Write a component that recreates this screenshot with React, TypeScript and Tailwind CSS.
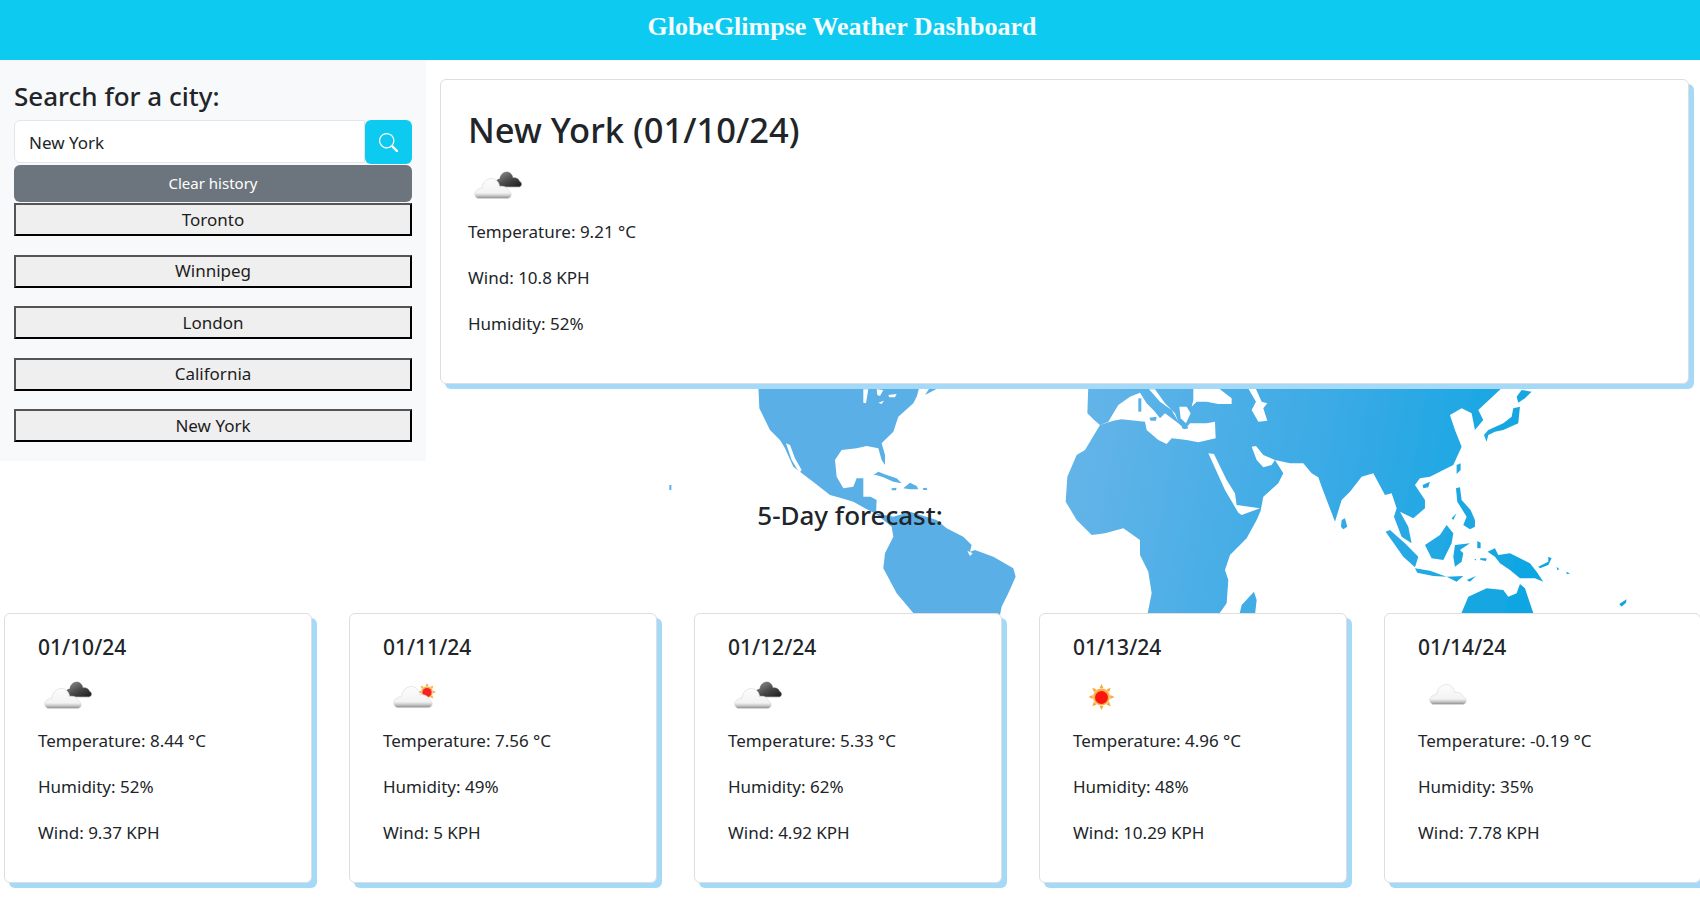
import { BsSearch } from "react-icons/bs";

const font = "font-['Noto_Sans',sans-serif]";

function CloudShape({ x, y, w, dark }: { x: number; y: number; w: number; dark?: boolean }) {
  const k = w / 38;
  return (
    <g transform={`translate(${x} ${y}) scale(${k})`}>
      <path
        d="M5 21.5C0 21.5 -1 14 4 12.5C5 11.5 6.5 11 8 11C8.5 3 17 -1 22 3C24.5 5 25.5 7.5 25.5 9.5C29.5 8.5 33.5 10.5 34.5 14C38.5 15.5 38 21.5 33.5 21.5Z"
        fill={dark ? "url(#darkCloud)" : "url(#lightCloud)"}
        stroke={dark ? "#5c5c5c" : "#dddddd"}
        strokeWidth="0.7"
        filter="url(#soft)"
      />
    </g>
  );
}

function Sun({ cx, cy, r, clip }: { cx: number; cy: number; r: number; clip?: boolean }) {
  const rays = [0, 45, 90, 135, 180, 225, 270, 315];
  return (
    <g filter="url(#soft)">
      {rays.map((a) => (
        <path
          key={a}
          d={`M${cx - r * 0.3} ${cy - r * 1.35}L${cx} ${cy - r * 2}L${cx + r * 0.3} ${cy - r * 1.35}Z`}
          fill="#f9a63a"
          transform={`rotate(${a} ${cx} ${cy})`}
        />
      ))}
      <circle cx={cx} cy={cy} r={r * 1.3} fill="#fbb04a" />
      <circle cx={cx} cy={cy + 0.5} r={r} fill={clip ? "#f5222a" : "#f8170f"} />
    </g>
  );
}

function WeatherIcon({ kind }: { kind: "broken" | "few" | "clear" | "scattered" }) {
  return (
    <svg width="57" height="57" viewBox="0 0 57 57" className="block">
      <defs>
        <linearGradient id="lightCloud" x1="0" y1="0" x2="0" y2="1">
          <stop offset="0" stopColor="#fdfdfd" />
          <stop offset="0.72" stopColor="#f3f3f3" />
          <stop offset="0.84" stopColor="#cfcfcf" />
          <stop offset="1" stopColor="#8a8a8a" />
        </linearGradient>
        <linearGradient id="darkCloud" x1="0" y1="0" x2="1" y2="1">
          <stop offset="0" stopColor="#9a9a9a" />
          <stop offset="0.55" stopColor="#484848" />
          <stop offset="1" stopColor="#1c1c1c" />
        </linearGradient>
        <filter id="soft" x="-20%" y="-20%" width="140%" height="140%">
          <feGaussianBlur stdDeviation="0.45" />
        </filter>
      </defs>
      {kind === "broken" && (
        <>
          <CloudShape x={26} y={13} w={28} dark />
          <CloudShape x={6} y={19} w={38} />
        </>
      )}
      {kind === "few" && (
        <>
          <Sun cx={44} cy={24} r={4.5} clip />
          <CloudShape x={10} y={17} w={40} />
        </>
      )}
      {kind === "clear" && <Sun cx={28.5} cy={29} r={6.5} />}
      {kind === "scattered" && <CloudShape x={11} y={15} w={38} />}
    </svg>
  );
}

const poly = (pts: string) => "M" + pts.trim().split(/\s+/).join("L") + "Z";
// shift a point list that was traced in the eastern crop into the coordinates of the western one
const east = (pts: string) =>
  pts
    .trim()
    .split(/\s+/)
    .map((p) => {
      const [x, y] = p.split(",").map(Number);
      return `${x + 870},${y}`;
    })
    .join(" ");

const americas = [
  "25,15 28,85 60,150 90,180 105,205 130,260 195,310 240,345 275,355 310,365 345,385 378,402 380,360 362,350 340,350 340,295 320,295 310,320 280,325 260,290 255,240 275,210 320,205 350,198 385,205 395,240 405,255 405,225 395,190 430,155 445,110 490,70 500,50 510,15",
  "525,45 545,15 565,15 558,28",
  "370,285 385,275 410,285 440,295 455,310 430,305 400,292 378,285",
  "460,325 480,308 500,318 505,328 480,328",
  "425,325 440,323 438,331 425,331",
  "518,325 530,323 532,330 520,330",
  "375,400 430,410 480,395 560,420 590,445 640,470 665,495 660,515 675,510 730,530 790,565 797,590 775,640 755,680 750,705 495,705 440,640 400,565 405,520 430,470 425,440",
  "-242,315 -236,315 -236,330 -242,330",
];

const americasWater = [
  "108,190 120,195 135,235 155,270 148,278 125,240",
  "340,28 355,28 348,70 340,68",
  "380,28 400,30 390,48 382,45",
  "415,45 440,42 435,52 418,52",
  "385,68 402,62 395,72",
  "652,512 668,520 660,528",
];

const oldWorld =
  "115,15 112,100 135,122 150,135 105,210 80,225 52,290 47,365 80,420 125,465 165,460 220,445 270,480 270,525 295,575 305,640 292,705 505,705 530,670 535,600 525,570 540,525 590,475 620,420 632,392 640,350 685,310 700,280 675,240 720,250 760,250 785,280 805,292 815,320 855,425 875,360 900,335 " +
  east(
    "65,290 100,280 135,345 155,340 170,385 162,410 185,470 215,490 205,440 180,395 220,415 255,385 255,360 225,315 240,295 270,290 340,255 365,200 345,150 330,105 365,85 395,100 405,150 430,120 415,90 495,15"
  );

const oldWorldWater = [
  "150,135 175,125 190,100 205,75 240,50 270,38 290,70 315,95 330,115 345,100 385,130 405,148 420,130 470,130 495,125 497,175 445,187 410,180 365,175 350,192 325,180 290,150 285,125 215,118 190,122",
  "297,28 315,28 345,70 375,100 385,125 365,90 330,65",
  "388,80 410,80 422,100 408,130 392,115",
  "430,20 500,20 545,55 545,72 505,72 470,65 440,65 425,80 430,60",
  "592,20 615,20 635,65 652,70 640,85 652,122 625,125 605,90 618,65",
  "475,220 492,222 530,300 555,340 560,375 630,385 575,405 565,398 525,330",
  "605,200 618,198 640,225 675,240 665,255 640,262 620,240",
];

const oldWorldIslands = [
  "265,55 274,55 274,95 265,95",
  "298,113 320,110 318,122 302,122",
  "395,140 415,140 413,146 398,146",
  "568,705 575,675 612,635 620,660 615,705",
];

const asiaIslands = [
  "5,420 15,415 22,440 10,448 3,440",
  "248,315 270,305 265,322 250,325",
  "350,255 362,250 362,270 350,282",
  "432,165 445,150 490,130 515,110 520,85 540,80 535,130 490,150 465,155 445,165 440,185",
  "530,50 545,30 575,35 555,55 535,68",
  "348,325 360,322 365,360 392,390 405,420 405,440 390,448 370,435 380,410 352,365",
  "335,415 350,400 340,420",
  "255,495 300,465 320,435 340,460 335,490 310,540 275,535",
  "345,495 390,490 360,510 370,520 365,545 345,560 340,530",
  "137,455 150,450 195,490 235,530 225,562 190,530",
  "225,565 270,572 320,590 280,588 232,578",
  "320,590 370,588 350,605",
  "380,600 408,588 390,605",
  "443,515 465,505 475,525 510,520 570,550 590,575 610,605 585,595 540,595 510,570 480,550 465,530",
  "412,483 422,488 422,505 412,505",
  "420,535 440,535 438,543 422,540",
  "403,537 408,537 408,542",
  "595,560 625,545 625,530 635,535 625,555 600,565",
  "650,560 658,568 652,570",
  "678,575 690,580 682,583",
  "838,672 860,658 858,668 845,680",
  "362,705 385,650 440,625 490,630 505,650 530,640 540,612 555,625 582,705",
];

function WorldMap() {
  return (
    <svg className="absolute left-0 top-0 w-[1700px] h-[901px]" viewBox="0 0 1700 901">
      <defs>
        <linearGradient id="land" gradientUnits="userSpaceOnUse" x1="100" y1="250" x2="1500" y2="500">
          <stop offset="0" stopColor="#62b4e8" />
          <stop offset="0.5" stopColor="#3aaae5" />
          <stop offset="1" stopColor="#0ba6e2" />
        </linearGradient>
        <filter id="mapSoft" x="-2%" y="-2%" width="104%" height="104%">
          <feGaussianBlur stdDeviation="1.5" />
        </filter>
      </defs>
      <g transform="translate(750 380) scale(0.3333)" filter="url(#mapSoft)">
        {americas.map((p) => (
          <path key={p} d={poly(p)} fill="#5aafe7" />
        ))}
        {americasWater.map((p) => (
          <path key={p} d={poly(p)} fill="#ffffff" />
        ))}
      </g>
      <g transform="translate(1050 380) scale(0.3333)" filter="url(#mapSoft)">
        <path d={poly(oldWorld)} fill="url(#land)" />
        {oldWorldWater.map((p) => (
          <path key={p} d={poly(p)} fill="#ffffff" />
        ))}
        {oldWorldIslands.map((p) => (
          <path key={p} d={poly(p)} fill="url(#land)" />
        ))}
        {asiaIslands.map((p) => (
          <path key={p} d={poly(east(p))} fill="url(#land)" />
        ))}
      </g>
    </svg>
  );
}

type Day = { date: string; icon: "broken" | "few" | "clear" | "scattered"; t: string; h: string; w: string };

const days: Day[] = [
  { date: "01/10/24", icon: "broken", t: "8.44", h: "52", w: "9.37" },
  { date: "01/11/24", icon: "few", t: "7.56", h: "49", w: "5" },
  { date: "01/12/24", icon: "broken", t: "5.33", h: "62", w: "4.92" },
  { date: "01/13/24", icon: "clear", t: "4.96", h: "48", w: "10.29" },
  { date: "01/14/24", icon: "scattered", t: "-0.19", h: "35", w: "7.78" },
];

const cities = ["Toronto", "Winnipeg", "London", "California", "New York"];

export default function App() {
  return (
    <div className={`relative w-[1700px] h-[901px] overflow-hidden bg-white text-[#212529] ${font}`}>
      <WorldMap />
      <div className="relative">
        <header className="h-[60px] bg-[#0dcaf0] flex items-start justify-center pt-[9px] pr-[16px]">
          <h1 className="font-['Liberation_Serif',serif] font-bold text-[26px] leading-[36px] text-[#f4fbfd]">
            GlobeGlimpse Weather Dashboard
          </h1>
        </header>

        <div className="flex items-start h-[401px]">
          <aside className="w-[426px] h-[401px] bg-[#f8f9fa] px-[14px] pt-[18px]">
            <h2 className="text-[26px] leading-[36px] font-medium mb-[6px]">Search for a city:</h2>
            <div className="flex h-[44px]">
              <input
                readOnly
                value="New York"
                className="w-[351px] h-[43px] bg-white border border-[#e4e7ea] rounded-l-[6px] pl-[14px] pt-[2px] text-[17px] text-[#212529] outline-none"
              />
              <button className="w-[47px] h-[44px] bg-[#0dcaf0] rounded-[6px] flex items-center justify-center text-white">
                <BsSearch size={19} />
              </button>
            </div>
            <button className="block w-[398px] h-[37px] bg-[#6c757d] rounded-[6px] text-white text-[15px] mt-px">
              Clear history
            </button>
            <div className="flex flex-col gap-[18.5px] mt-px">
              {cities.map((c) => (
                <button
                  key={c}
                  className="w-[398px] h-[33px] bg-[#efefef] border-2 border-[#555] border-b-black border-r-black text-[17px] leading-[26px] text-[#1d1d1d]"
                >
                  {c}
                </button>
              ))}
            </div>
          </aside>

          <main className="w-[1249px] h-[305px] ml-[14px] mt-[19px] bg-white border border-[#dedede] rounded-[6px] shadow-[5px_5px_0_#a5d9f8] pl-[27px] pt-[26px]">
            <h2 className="text-[34.5px] leading-[48px] font-medium">New York (01/10/24)</h2>
            <div className="h-[46px] mt-[4px]">
              <WeatherIcon kind="broken" />
            </div>
            <div className="text-[17px] leading-[27px] mt-[14px] flex flex-col gap-[19px]">
              <p>Temperature: 9.21 °C</p>
              <p>Wind: 10.8 KPH</p>
              <p>Humidity: 52%</p>
            </div>
          </main>
        </div>

        <h3 className="text-center text-[26px] leading-[34px] font-medium mt-[37px]">5-Day forecast:</h3>

        <div className="flex gap-[37px] pl-[4px] mt-[81px]">
          {days.map((d, i) => (
            <article
              key={d.date}
              className={`${i === 4 ? "w-[317px]" : "w-[308px]"} h-[270px] shrink-0 bg-white border border-[#dedede] rounded-[6px] shadow-[5px_5px_0_#a5d9f8] pl-[33px] pt-[18px]`}
            >
              <h4 className="text-[21px] leading-[30px] font-medium">{d.date}</h4>
              <div className="h-[46px] mt-[6px]">
                <WeatherIcon kind={d.icon} />
              </div>
              <div className="text-[17px] leading-[27px] mt-[13px] flex flex-col gap-[19px]">
                <p>Temperature: {d.t} °C</p>
                <p>Humidity: {d.h}%</p>
                <p>Wind: {d.w} KPH</p>
              </div>
            </article>
          ))}
        </div>
      </div>
    </div>
  );
}
